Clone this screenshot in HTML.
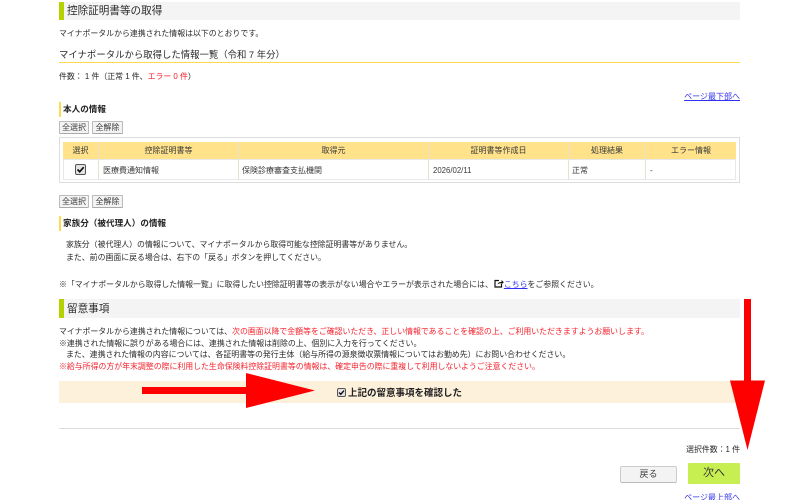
<!DOCTYPE html>
<html lang="ja">
<head>
<meta charset="utf-8">
<title>控除証明書等の取得</title>
<style>
html,body{margin:0;padding:0;background:#fff;}
body{width:800px;height:500px;overflow:hidden;position:relative;font-family:"Liberation Sans","Noto Sans CJK JP",sans-serif;color:#2a2a2a;}
#w{position:absolute;left:0;top:0;width:800px;height:500px;overflow:hidden;}
.t{position:absolute;white-space:nowrap;line-height:14px;height:14px;font-size:7.9px;filter:blur(.25px);}
.b{position:absolute;}
.r{color:#f5222d;}
a{color:#3030f0;text-decoration:underline;}
.btn{position:absolute;box-sizing:border-box;background:#f3f3f3;border:1px solid #bbb;border-bottom-color:#aaa;border-radius:1px;font-size:8px;line-height:11px;text-align:center;color:#3a3a3a;height:13px;}
.th{position:absolute;top:142px;height:17px;line-height:17px;font-size:8px;text-align:center;white-space:nowrap;color:#3a3a3a;filter:blur(.25px);}
.td{position:absolute;top:161px;height:19px;line-height:19px;font-size:8px;white-space:nowrap;color:#3a3a3a;filter:blur(.25px);}
</style>
</head>
<body>
<div id="w">
<div class="b" style="left:59px;top:2px;width:681px;height:18px;background:#f4f4f4"></div>
<div class="b" style="left:59px;top:2px;width:5px;height:18px;background:#b5d100"></div>
<div class="t" style="left:67px;top:4px;font-size:10.6px">控除証明書等の取得</div>
<div class="t" style="left:59px;top:27px">マイナポータルから連携された情報は以下のとおりです。</div>
<div class="t" style="left:59px;top:48px;font-size:9.4px">マイナポータルから取得した情報一覧（令和 7 年分）</div>
<div class="b" style="left:59px;top:62px;width:681px;height:1px;background:#ffd94f"></div>
<div class="t" style="left:59px;top:70px">件数： 1 件（正常 1 件、<span class="r">エラー 0 件</span>）</div>
<div class="t" style="right:60px;top:90px;font-size:8px"><a href="#">ページ最下部へ</a></div>

<div class="b" style="left:59px;top:102px;width:2px;height:15px;background:#ffd94f"></div>
<div class="t" style="left:63px;top:102px;font-size:8.6px;font-weight:bold;color:#222">本人の情報</div>
<div class="btn" style="left:59px;top:121px;width:30px">全選択</div>
<div class="btn" style="left:92px;top:121px;width:31px">全解除</div>

<div class="b" style="left:59px;top:137px;width:681px;height:46px;box-sizing:border-box;border:1px solid #ddd"></div>
<div class="b" style="left:63px;top:142px;width:673px;height:38px;background:#e8e8e8"></div>
<div class="b" style="left:63px;top:142px;width:673px;height:17px;background:#ffe28a"></div>
<div class="b" style="left:64px;top:160px;width:671px;height:19px;background:#fff"></div>
<div class="b" style="left:98px;top:142px;width:1px;height:38px;background:#e6e2cf"></div>
<div class="b" style="left:238px;top:142px;width:1px;height:38px;background:#e6e2cf"></div>
<div class="b" style="left:428px;top:142px;width:1px;height:38px;background:#e6e2cf"></div>
<div class="b" style="left:568px;top:142px;width:1px;height:38px;background:#e6e2cf"></div>
<div class="b" style="left:645px;top:142px;width:1px;height:38px;background:#e6e2cf"></div>
<div class="th" style="left:63px;width:35px">選択</div>
<div class="th" style="left:99px;width:139px">控除証明書等</div>
<div class="th" style="left:239px;width:189px">取得元</div>
<div class="th" style="left:429px;width:139px">証明書等作成日</div>
<div class="th" style="left:569px;width:76px">処理結果</div>
<div class="th" style="left:646px;width:90px">エラー情報</div>
<svg class="b" style="left:75px;top:164px" width="11" height="11" viewBox="0 0 11 11"><rect x="0.5" y="0.5" width="10" height="10" rx="1.500" fill="#e4e4e4" stroke="#555"/><path d="M2.500 5.500L4.700 7.700L8.700 3.200" fill="none" stroke="#111" stroke-width="1.700"/></svg>
<div class="td" style="left:103px">医療費通知情報</div>
<div class="td" style="left:242px">保険診療審査支払機関</div>
<div class="td" style="left:433px;font-size:7.8px">2026/02/11</div>
<div class="td" style="left:572px">正常</div>
<div class="td" style="left:650px">-</div>

<div class="btn" style="left:59px;top:195px;width:30px">全選択</div>
<div class="btn" style="left:92px;top:195px;width:31px">全解除</div>
<div class="b" style="left:59px;top:216px;width:2px;height:15px;background:#ffd94f"></div>
<div class="t" style="left:63px;top:216px;font-size:8.6px;font-weight:bold;color:#222">家族分（被代理人）の情報</div>
<div class="t" style="left:66px;top:238px">家族分（被代理人）の情報について、マイナポータルから取得可能な控除証明書等がありません。</div>
<div class="t" style="left:66px;top:251px">また、前の画面に戻る場合は、右下の「戻る」ボタンを押してください。</div>
<div class="t" style="left:59px;top:278px">※「マイナポータルから取得した情報一覧」に取得したい控除証明書等の表示がない場合やエラーが表示された場合には、<svg width="10" height="9" viewBox="0 0 10 9" style="vertical-align:-1px;margin-left:1px"><path d="M5 1.500H1V8H7.500V5" fill="none" stroke="#111" stroke-width="1.200"/><path d="M3.500 5.500C4 3.500 5.500 3 7.500 3V1L9.800 3.300L7.500 5.500V4.200C6 4.200 4.500 4.300 3.500 5.500Z" fill="#111"/></svg><a href="#">こちら</a>をご参照ください。</div>

<div class="b" style="left:59px;top:299px;width:681px;height:19px;background:#f4f4f4"></div>
<div class="b" style="left:59px;top:299px;width:5px;height:19px;background:#b5d100"></div>
<div class="t" style="left:67px;top:302px;font-size:10.6px">留意事項</div>
<div class="t" style="left:59px;top:325px">マイナポータルから連携された情報については、<span class="r">次の画面以降で金額等をご確認いただき、正しい情報であることを確認の上、ご利用いただきますようお願いします。</span></div>
<div class="t" style="left:59px;top:337px">※連携された情報に誤りがある場合には、連携された情報は削除の上、個別に入力を行ってください。</div>
<div class="t" style="left:66px;top:348px">また、連携された情報の内容については、各証明書等の発行主体（給与所得の源泉徴収票情報についてはお勤め先）にお問い合わせください。</div>
<div class="t r" style="left:59px;top:360px">※給与所得の方が年末調整の際に利用した生命保険料控除証明書等の情報は、確定申告の際に重複して利用しないようご注意ください。</div>

<div class="b" style="left:59px;top:381px;width:681px;height:22px;background:#fdf1dc"></div>
<svg class="b" style="left:337px;top:388px" width="9" height="9" viewBox="0 0 9 9"><rect x="0.5" y="0.5" width="8" height="8" rx="1.500" fill="#e4e4e4" stroke="#555"/><path d="M2 4.500L3.800 6.300L7 2.600" fill="none" stroke="#111" stroke-width="1.400"/></svg>
<div class="t" style="left:348px;top:387px;font-size:9.5px;font-weight:bold;color:#222">上記の留意事項を確認した</div>

<div class="b" style="left:59px;top:428px;width:681px;height:1px;background:#ddd"></div>
<div class="t" style="right:60px;top:443px">選択件数：1 件</div>
<div class="btn" style="left:620px;top:466px;width:57px;height:17px;line-height:15px;font-size:9px;border-color:#ccc;border-bottom-color:#bbb;border-radius:2px">戻る</div>
<div class="b" style="left:688px;top:463px;width:52px;height:21px;background:#c8ef52;border-radius:1px;text-align:center;line-height:21px;font-size:11px;color:#333">次へ</div>
<div class="t" style="right:60px;top:491px;font-size:8px"><a href="#">ページ最上部へ</a></div>

<svg class="b" style="left:0;top:0" width="800" height="500" viewBox="0 0 800 500">
<rect x="142" y="387" width="104" height="7" fill="#ff0000"/>
<path d="M246 373L315 390.500L246 408Z" fill="#ff0000"/>
<rect x="744" y="299" width="7" height="82" fill="#ff0000"/>
<path d="M730 380.500H765L747.500 450Z" fill="#ff0000"/>
</svg>
</div>
</body>
</html>
